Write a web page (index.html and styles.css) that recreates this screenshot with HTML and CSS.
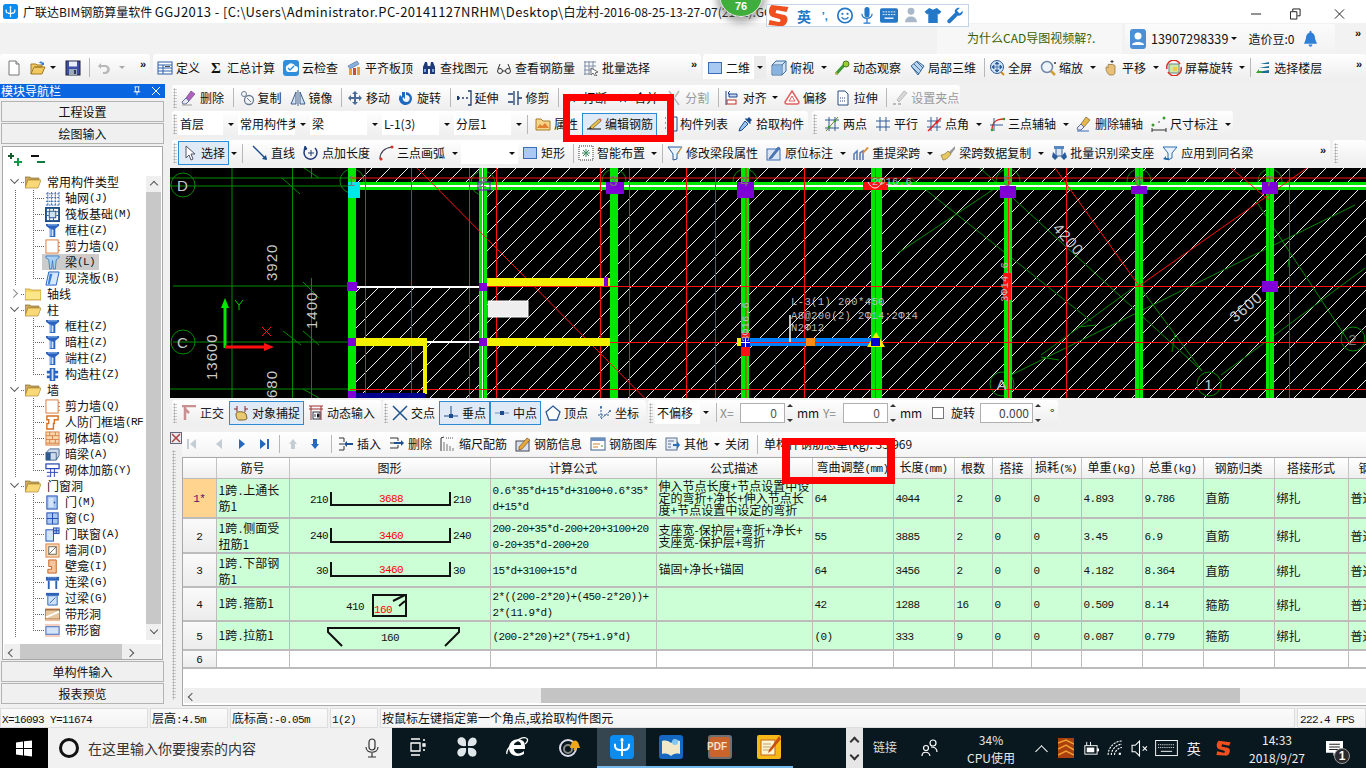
FILE: index.html
```html
<!DOCTYPE html>
<html lang="zh-CN">
<head>
<meta charset="utf-8">
<title>广联达BIM钢筋算量软件 GGJ2013</title>
<link rel="stylesheet" href="styles.css">
</head>
<body>
<svg class="defs" aria-hidden="true">
<defs>
<symbol id="new" viewBox="0 0 16 16"><path d="M3 1h7l3 3v11H3z" fill="#fff" stroke="#777"/><path d="M10 1v3h3" fill="#ddd" stroke="#777"/></symbol>
<symbol id="open" viewBox="0 0 16 16"><path d="M1 14V4h5l1 1h5v2H4l-3 7h11l3-7H5" fill="#f2c860" stroke="#a07a20"/><path d="M9 3c1-2 3-2 4 0l1-1v3h-3l1-1c-1-1-2-1-3-1z" fill="#3a7fd0"/></symbol>
<symbol id="save" viewBox="0 0 16 16"><rect x="1" y="1" width="14" height="14" fill="#3c4ea8" stroke="#223"/><rect x="4" y="1.500" width="8" height="5" fill="#e8eefc"/><rect x="4" y="9" width="8" height="6" fill="#9ab"/><rect x="9" y="10" width="2" height="4" fill="#335"/></symbol>
<symbol id="undo" viewBox="0 0 16 16"><path d="M5 3L2 6l3 3V7h4c3 0 3 4 0 5H7v2h3c5-1 5-8 0-9H5z" fill="#b8b8b8"/></symbol>
<symbol id="tbl" viewBox="0 0 16 16"><rect x="1" y="2" width="14" height="12" fill="#fff" stroke="#2a5ea8"/><path d="M1 5h14M1 8h14M1 11h14M6 5v9" stroke="#2a5ea8"/><rect x="8" y="6" width="5" height="1" fill="#555"/></symbol>
<symbol id="cloud" viewBox="0 0 16 16"><rect width="16" height="16" rx="3" fill="#2f8fdc"/><path d="M3 9a3 3 0 0 1 2-4 4 4 0 0 1 7 1 3 3 0 0 1 0 6H5a3 3 0 0 1-2-3z" fill="#fff"/><path d="M5 8l2 2 4-4" fill="none" stroke="#2f8fdc" stroke-width="1.500"/></symbol>
<symbol id="flush" viewBox="0 0 16 16"><path d="M2 6l9-5 2 3-9 5z" fill="#8ab0dc" stroke="#46689a" stroke-width=".6"/><rect x="3" y="9" width="3" height="6" fill="#e8a040"/><rect x="7" y="8" width="3" height="7" fill="#c85030"/><rect x="11" y="7" width="3" height="8" fill="#e8a040"/></symbol>
<symbol id="binoc" viewBox="0 0 16 16"><path d="M2 14V7l2-5h2l1 5v7zM9 14V7l1-5h2l2 5v7z" fill="#1e3a78"/><rect x="7" y="6" width="2" height="3" fill="#1e3a78"/><rect x="3" y="9" width="2" height="3" fill="#7fa5dc"/><rect x="11" y="9" width="2" height="3" fill="#7fa5dc"/></symbol>
<symbol id="glass" viewBox="0 0 16 16"><circle cx="4" cy="11" r="2.500" fill="none" stroke="#333"/><circle cx="12" cy="11" r="2.500" fill="none" stroke="#333"/><path d="M6.500 11h3M2 9l2-5M14 9l-2-5" stroke="#333" fill="none"/></symbol>
<symbol id="batch" viewBox="0 0 16 16"><path d="M1 2h12M1 6h12M1 10h10M1 14h6M2 1v14M6 1v14M10 1v11" stroke="#8090a8" fill="none"/><path d="M8 8l7 4-3 1 2 3-2 0-2-3-2 2z" fill="#fff" stroke="#333" stroke-width=".7"/></symbol>
<symbol id="sq" viewBox="0 0 16 16"><rect x="1.500" y="2.500" width="13" height="11" fill="#a9c8f2" stroke="#3a6cb8"/></symbol>
<symbol id="box3" viewBox="0 0 16 16"><path d="M1 5l4-4h10v10l-4 4H1z" fill="#cfe2f6" stroke="#3c6d9c"/><path d="M1 5h10v10M11 5l4-4" fill="none" stroke="#3c6d9c"/><path d="M2 6h8v8H2z" fill="#88b4e2"/></symbol>
<symbol id="orbit" viewBox="0 0 16 16"><path d="M2 14L12 3" stroke="#3a9a30" stroke-width="3"/><circle cx="12" cy="4" r="3" fill="#9acd32" stroke="#4a7a20"/><path d="M1 15l3-1-2-2z" fill="#d8b040"/></symbol>
<symbol id="loc3" viewBox="0 0 16 16"><path d="M2 6l6-5 7 5-6 9z" fill="#b9d4ee" stroke="#3c6d9c"/><path d="M5 4l7 7M8 2l6 6M3 7l7 7" stroke="#3c6d9c"/></symbol>
<symbol id="full" viewBox="0 0 16 16"><circle cx="8" cy="7" r="6.500" fill="#cfe2f6" stroke="#2c5c98"/><path d="M8 2v10M3 7h10M8 2l-2 2h4zM8 12l-2-2h4zM3 7l2-2v4zM13 7l-2-2v4z" fill="#2c5c98" stroke="#2c5c98" stroke-width=".7"/><path d="M12 12l3 3" stroke="#d08a20" stroke-width="2"/></symbol>
<symbol id="zoom" viewBox="0 0 16 16"><circle cx="7" cy="7" r="5.500" fill="#eef3fa" stroke="#7088a8" stroke-width="1.500"/><path d="M11 11l4 4" stroke="#d0a030" stroke-width="2.500"/><path d="M14 3h2M15 2v2" stroke="#333"/></symbol>
<symbol id="pan" viewBox="0 0 16 16"><path d="M3 8c0-2 1-1 2 0V5c0-1 1-1 1 0l1-1c1 0 1 1 1 1l1-1c1 0 1 1 1 1l1 0c1 0 1 1 1 2v5c0 2-1 3-3 3H7c-2 0-4-4-4-7z" fill="#e8c078" stroke="#8a6a30" stroke-width=".7"/><path d="M9 0v3M7.500 1.500h3" stroke="#334"/></symbol>
<symbol id="rot" viewBox="0 0 16 16"><rect x="3" y="4" width="10" height="9" fill="#cfe8a8" stroke="#688"/><rect x="7" y="7" width="4" height="4" fill="#f0d040"/><path d="M1 9A7 7 0 0 1 14 4" fill="none" stroke="#d83020" stroke-width="1.500"/><path d="M15 7A7 7 0 0 1 2 12" fill="none" stroke="#d83020" stroke-width="1.500"/></symbol>
<symbol id="floors" viewBox="0 0 16 16"><path d="M5 4l9-2v2H5zM4 8l10-2v2H4zM3 12l11-2v3H3z" fill="#1e6c98"/><path d="M1 13l3-4v2h3v2z" fill="#3aa030"/></symbol>
<symbol id="erase" viewBox="0 0 16 16"><path d="M10 1l4 3-6 7-3-3z" fill="#b060c0" stroke="#604070" stroke-width=".6"/><path d="M5 8l3 3-3 3H2l-1-2z" fill="#e8e8f4" stroke="#5c6c9c"/><path d="M1 15h10" stroke="#999"/></symbol>
<symbol id="copy" viewBox="0 0 16 16"><circle cx="10" cy="10" r="4.500" fill="none" stroke="#6a7c94" stroke-width="1.300"/><circle cx="5" cy="4" r="2.500" fill="none" stroke="#6a7c94"/><path d="M8 8l4 4" stroke="#6a7c94"/></symbol>
<symbol id="mirror" viewBox="0 0 16 16"><path d="M1 14L6 2v12zM15 14L10 2v12z" fill="#d4e2f2" stroke="#3c5f8c"/><path d="M8 0v16" stroke="#3c5f8c"/></symbol>
<symbol id="move" viewBox="0 0 16 16"><path d="M8 1l-3 3h2v3H4V5L1 8l3 3V9h3v3H5l3 3 3-3H9V9h3v2l3-3-3-3v2H9V4h2z" fill="#4c6c98"/></symbol>
<symbol id="rotate" viewBox="0 0 16 16"><path d="M4 2v5L2 5a6.500 6.500 0 1 0 6-3v3a3.500 3.500 0 1 1-3 2l2 2V2z" fill="#1e68c0"/></symbol>
<symbol id="extend" viewBox="0 0 16 16"><path d="M12 1h3v14h-3M1 8h3M6 8h2M10 8h2" stroke="#1c3f70" fill="none" stroke-width="1.300"/><path d="M1 6h2v4H1z" fill="#1c3f70"/></symbol>
<symbol id="trim" viewBox="0 0 16 16"><path d="M7 1v14M11 1v14M1 4h5M1 12h5M11 8h4" stroke="#1c3f70" fill="none" stroke-width="1.300"/></symbol>
<symbol id="cutb" viewBox="0 0 16 16"><path d="M1 8h5M10 8h5M6 4l-2 4 2 4M10 4l2 4-2 4" stroke="#2858a0" fill="none" stroke-width="1.500"/></symbol>
<symbol id="split" viewBox="0 0 16 16"><path d="M3 1l10 14M13 1L9 7M7 10l-4 5" stroke="#b8b8b8" fill="none" stroke-width="1.500"/></symbol>
<symbol id="alignl" viewBox="0 0 16 16"><path d="M2 1v14M5 4h8v3H5z" stroke="#20448c" fill="#c8d8f0"/><rect x="3" y="10" width="9" height="4" fill="#fff" stroke="#c03020"/><path d="M6 1l-2 2 2 2" fill="none" stroke="#20448c"/></symbol>
<symbol id="offset" viewBox="0 0 16 16"><path d="M8 1l7 11c0 2-1 2-2 2H3c-1 0-2 0-2-2z" fill="#fff" stroke="#e06060" stroke-width="1.500"/><path d="M8 6l3 5H5z" fill="#fff" stroke="#e06060"/></symbol>
<symbol id="stretch" viewBox="0 0 16 16"><path d="M3 1h7l3 3v11H3z" fill="#fff" stroke="#2a4c80"/><path d="M5 8h6M5 11h6" stroke="#2a4c80" stroke-dasharray="1 1"/></symbol>
<symbol id="pinset" viewBox="0 0 16 16"><path d="M12 1l3 2-8 9-2-2z" fill="#d8d8d8" stroke="#bbb"/><path d="M1 14h3M6 14h3" stroke="#bbb" stroke-width="2"/></symbol>
<symbol id="prop" viewBox="0 0 16 16"><path d="M1 14V3h5l2 2h7v9z" fill="#f4d488" stroke="#a87c28"/><path d="M2 12l3-4 2 2 3-3 4 5z" fill="#e08030"/></symbol>
<symbol id="edit" viewBox="0 0 16 16"><path d="M1 13h14" stroke="#333" stroke-width="1.200"/><path d="M4 11l9-8 2 2-9 8z" fill="#e8c048" stroke="#6a5020" stroke-width=".7"/><path d="M13 3l2 2 1-1-2-2z" fill="#e07070"/><path d="M4 11l-2 2 4 0z" fill="#333"/></symbol>
<symbol id="list" viewBox="0 0 16 16"><path d="M2 2h3M2 7h3M2 12h3" stroke="#224a88" stroke-dasharray="1 1"/><path d="M9 1h5v14H9" fill="none" stroke="#224a88"/></symbol>
<symbol id="pick" viewBox="0 0 16 16"><path d="M12 1l3 3-2 2 1 1-1 1-5-5 1-1 1 1z" fill="#1c4c90"/><path d="M8 5l3 3-6 6-3 1 1-3z" fill="#9cc4ee" stroke="#1c4c90"/></symbol>
<symbol id="p2" viewBox="0 0 16 16"><path d="M1 4h14M1 12h14M5 1v14M11 1v14" stroke="#345c94" fill="none"/><path d="M2 15L14 1" stroke="#6a8a30"/><circle cx="5" cy="11" r="1.300" fill="#3a9a30"/><circle cx="11" cy="5" r="1.300" fill="#3a9a30"/></symbol>
<symbol id="par" viewBox="0 0 16 16"><path d="M1 5h14M1 11h14M5 1v14M11 1v14" stroke="#345c94" fill="none"/></symbol>
<symbol id="ang" viewBox="0 0 16 16"><path d="M1 5h14M1 11h14M5 1v14M11 1v14" stroke="#345c94" fill="none"/><path d="M2 15L15 2" stroke="#e02020" stroke-width="1.400"/><circle cx="11" cy="6" r="1.500" fill="#e02020"/></symbol>
<symbol id="arc3" viewBox="0 0 16 16"><path d="M3 14C3 6 7 3 15 3" fill="none" stroke="#d83020" stroke-width="1.300"/><path d="M1 9h13M5 2v13" stroke="#345c94"/><circle cx="3" cy="14" r="1.300" fill="#3a9a30"/><circle cx="15" cy="3" r="1.300" fill="#3a9a30"/></symbol>
<symbol id="delax" viewBox="0 0 16 16"><path d="M10 1l4 3-6 7-3-3z" fill="#e8b848" stroke="#604020" stroke-width=".6"/><path d="M5 8l3 3-3 3H2l-1-2z" fill="#e8e8f4" stroke="#5c6c9c"/><path d="M1 15h12" stroke="#3a6cb8"/></symbol>
<symbol id="dim" viewBox="0 0 16 16"><circle cx="2" cy="9" r="1.500" fill="#3a9a30"/><circle cx="13" cy="2" r="1.500" fill="#3a9a30"/><path d="M1 12v4M15 12v4M1 14h14" stroke="#333"/><circle cx="8" cy="6" r=".8" fill="#333"/></symbol>
<symbol id="ptr" viewBox="0 0 16 16"><path d="M4 1v12l3-3 2 5 2-1-2-5h4z" fill="#fff" stroke="#556"/></symbol>
<symbol id="line" viewBox="0 0 16 16"><path d="M1 1l13 13" stroke="#1c4c90" stroke-width="1.500"/><path d="M15 15l-5-1 4-4z" fill="#1c4c90"/></symbol>
<symbol id="plus" viewBox="0 0 16 16"><path d="M3 3a6.500 6.500 0 1 0 9 0" fill="none" stroke="#1e3a78" stroke-width="1.500"/><path d="M2 1l2 3-3 1zM8 5v6M5 8h6" stroke="#1e3a78" fill="#1e3a78"/></symbol>
<symbol id="arc" viewBox="0 0 16 16"><path d="M2 14C2 7 7 3 14 2" fill="none" stroke="#445" stroke-width="1.200"/><circle cx="3" cy="14" r="1.500" fill="#d83020"/><circle cx="14" cy="2" r="1.500" fill="#d83020"/></symbol>
<symbol id="smart" viewBox="0 0 16 16"><rect x="1" y="1" width="14" height="14" fill="#fff" stroke="#333" stroke-dasharray="1 1"/><path d="M8 4v8M4 8h8M5 5l6 6M11 5l-6 6" stroke="#3a8a60"/></symbol>
<symbol id="funnel" viewBox="0 0 16 16"><path d="M1 2h14l-5 7v5l-4 1V9z" fill="#eaf2fc" stroke="#2a5c9c"/><path d="M11 9l4-7" stroke="#e8b030"/></symbol>
<symbol id="tag" viewBox="0 0 16 16"><rect x="1" y="4" width="13" height="11" fill="#d8e4f4" stroke="#3a6cb8"/><path d="M4 12l8-10 2 1-8 10-3 1z" fill="#4c7cc0" stroke="#1c3f70" stroke-width=".5"/></symbol>
<symbol id="reb" viewBox="0 0 16 16"><path d="M1 15V9l3-3v9M7 15V8l3-2v9" fill="none" stroke="#5878b0" stroke-width="1.500"/><path d="M9 8l5-6 2 1-6 6z" fill="#d89040"/></symbol>
<symbol id="brush" viewBox="0 0 16 16"><path d="M9 7l6-6v3l-4 5z" fill="#999"/><path d="M1 10c3 0 5-2 7-4l3 3c-2 3-5 6-8 6z" fill="#e4c860" stroke="#806020" stroke-width=".6"/></symbol>
<symbol id="idf" viewBox="0 0 16 16"><rect x="3" y="1" width="10" height="3" fill="#5888c0"/><path d="M5 4v7h6V4" fill="#dde8f4" stroke="#345c94"/><path d="M2 7l5 5-3 3-3-3zM14 7l-4 5 3 3 3-3z" fill="#2a5c9c"/></symbol>
<symbol id="apply" viewBox="0 0 16 16"><path d="M1 2h14l-5 6v5l-4 2V8z" fill="#eaf2fc" stroke="#2a6cb0"/><path d="M1 14l3-3v2h3v2H4z" fill="#2a6cb0"/></symbol>
<symbol id="ortho" viewBox="0 0 16 16"><path d="M1 1h14M4 1v14M4 4l4 4" stroke="#c89090" fill="none" stroke-width="2.500"/></symbol>
<symbol id="snap" viewBox="0 0 16 16"><path d="M1 4h3M12 4h3M4 1v6M12 1v6" stroke="#8a2020" fill="none"/><path d="M3 9c0-3 8-3 10 0l1 4c0 2-3 2-5 2H6c-2 0-3-3-3-6z" fill="#e8c870" stroke="#806020"/></symbol>
<symbol id="dyn" viewBox="0 0 16 16"><path d="M1 1h14M1 4h14M3 1v14M13 1v14" stroke="#a03030"/><rect x="5" y="7" width="7" height="7" fill="#fff" stroke="#334"/><path d="M7 9v3M9 9h2v3H9" stroke="#334"/></symbol>
<symbol id="xpt" viewBox="0 0 16 16"><path d="M1 1l14 14M15 1L1 15" stroke="#1c5090" stroke-width="1.500"/></symbol>
<symbol id="perp" viewBox="0 0 16 16"><path d="M8 1v10" stroke="#1c4c90"/><path d="M1 11h14" stroke="#1c4c90"/><rect x="6" y="9" width="4" height="4" fill="#1c4c90"/></symbol>
<symbol id="mid" viewBox="0 0 16 16"><path d="M1 8h14" stroke="#7090c0"/><rect x="6" y="6" width="4" height="4" fill="#1c4c90"/></symbol>
<symbol id="vert" viewBox="0 0 16 16"><path d="M8 1l7 6-3 8H4L1 7z" fill="#fff" stroke="#2c5c98" stroke-width="1.300"/></symbol>
<symbol id="coord" viewBox="0 0 16 16"><path d="M5 2v12l9-8M2 10h12" stroke="#2c5c98" fill="none" stroke-dasharray="2 1"/><circle cx="5" cy="2" r="1" fill="#2c5c98"/><circle cx="14" cy="6" r="1" fill="#2c5c98"/></symbol>
<symbol id="ins" viewBox="0 0 16 16"><path d="M1 2h5M1 8h5M1 14h5M6 2v4M6 10v4" stroke="#333" fill="none"/><path d="M9 8h6" stroke="#1c5090" stroke-width="2"/><path d="M9 5l-3 3 3 3z" fill="#1c5090"/></symbol>
<symbol id="del" viewBox="0 0 16 16"><path d="M1 2h8M1 7h4M1 12h8M9 2v3M9 9v3" stroke="#333" fill="none"/><path d="M5 7h7" stroke="#1c5090" stroke-width="2"/><path d="M12 4l3 3-3 3z" fill="#1c5090"/></symbol>
<symbol id="scale" viewBox="0 0 16 16"><path d="M1 15V2M1 2l3-1" stroke="#333"/><path d="M4 15V6M7 15V8M10 15v-5M13 15v-3" stroke="#777"/><path d="M6 2h7" stroke="#555" stroke-dasharray="1 1"/></symbol>
<symbol id="info" viewBox="0 0 16 16"><rect x="1" y="5" width="13" height="10" fill="#d8e0ec" stroke="#445"/><path d="M4 11l8-9 3 2-8 9-3 1z" fill="#e8a838" stroke="#604020" stroke-width=".6"/></symbol>
<symbol id="lib" viewBox="0 0 16 16"><rect x="1" y="2" width="14" height="12" fill="#fff" stroke="#3a6090"/><rect x="1" y="2" width="14" height="3" fill="#6a90c0"/><path d="M3 8h7M3 11h5" stroke="#d08030"/><path d="M11 10h2" stroke="#3a9a30"/></symbol>
<symbol id="other" viewBox="0 0 16 16"><rect x="1" y="2" width="11" height="12" fill="#e8eef8" stroke="#5a7090"/><path d="M8 8h4V5l3 4-3 4v-3H8z" fill="#2a6cc0"/><path d="M3 5h6M3 8h3M3 11h3" stroke="#5a7090"/></symbol>
<symbol id="folderc" viewBox="0 0 16 14"><path d="M0 13V2h5l1 1h10v10z" fill="#f8d868" stroke="#b89030" stroke-width=".7"/><path d="M1 5h14v7H1z" fill="#fbe68c"/></symbol>
<symbol id="foldero" viewBox="0 0 16 14"><path d="M0 13V2h5l1 1h8v2H4z" fill="#c8a860" stroke="#8a7030" stroke-width=".7"/><path d="M0 13l3-8h13l-3 8z" fill="#f8d878" stroke="#b08a30" stroke-width=".7"/></symbol>
<symbol id="tgrid" viewBox="0 0 16 16"><path d="M1 3h14M1 7h14M1 11h14M1 15h14M3 1v14M7 1v14M11 1v14M15 1v14" stroke="#2c5fb0" stroke-dasharray="2 1"/></symbol>
<symbol id="traft" viewBox="0 0 16 16"><rect x="1" y="1" width="14" height="14" fill="#fff" stroke="#1c4c88" stroke-width="2"/><rect x="4.500" y="4.500" width="7" height="7" fill="#cfe0f4" stroke="#1c4c88"/><path d="M2 5h2M2 9h2M12 5h2M12 9h2M5 2v2M9 2v2M5 12v2M9 12v2" stroke="#1c4c88"/></symbol>
<symbol id="tcol" viewBox="0 0 16 16"><path d="M1 1h14v2l-4 3v9H5V6L1 3z" fill="#2a62c0"/><path d="M3 2h10M6 6v8" stroke="#9cc0f0"/><path d="M7 7h2v7H7z" fill="#cfe2fa"/></symbol>
<symbol id="twall" viewBox="0 0 16 16"><rect x="1" y="1" width="13" height="14" fill="url(#spk)" stroke="#d87838"/><path d="M14 4h2M14 8h2M14 12h2" stroke="#d87838"/></symbol>
<symbol id="tbeam" viewBox="0 0 16 16"><path d="M1 1h14v2l-3 2-1 10H9L8 6 7 15H5L4 5 1 3z" fill="#a8cff0" stroke="#2a72c0" stroke-width=".8"/></symbol>
<symbol id="tslab" viewBox="0 0 16 16"><path d="M4 1h11l-3 14H1z" fill="#d6e8fb" stroke="#1c5cc0"/><path d="M3 14L5 3h3L5 14z" fill="#3a80d8"/></symbol>
<symbol id="tstruct" viewBox="0 0 16 16"><path d="M5 1h6v3h3v3h-3v2h3v3h-3v3H5v-3H2V9h3V7H2V4h3z" fill="#2a62c0"/><path d="M7 2h2v12H7z" fill="#cfe2fa"/></symbol>
<symbol id="tdoorw" viewBox="0 0 16 16"><path d="M2 1h12v4h-4v4H9v6H2V9h2V5H2z" fill="#fff" stroke="#d87020" stroke-width="1.500"/></symbol>
<symbol id="tbrick" viewBox="0 0 16 16"><rect x="1" y="1" width="14" height="14" fill="#f8d8b0" stroke="#d88048"/><path d="M1 5h14M1 9h14M1 13h14M5 1v4M11 1v4M8 5v4M5 9v4M11 9v4" stroke="#d88048"/></symbol>
<symbol id="thid" viewBox="0 0 16 16"><path d="M1 6l4-4h10v7l-3 5H1z" fill="#cfdcee" stroke="#4a6890"/><path d="M1 6h11v8" fill="none" stroke="#4a6890"/><rect x="1" y="6" width="5" height="8" fill="#2f5a90"/></symbol>
<symbol id="tmas" viewBox="0 0 16 16"><rect x="1" y="1" width="14" height="5" fill="#fff" stroke="#2448b0" stroke-width="1.300"/><path d="M6 6v9M10 6v9M2 10h12M2 14h4" stroke="#2448b0"/></symbol>
<symbol id="tdoor" viewBox="0 0 16 16"><rect x="2" y="1" width="11" height="14" fill="#a9c8f0" stroke="#1c4cb0"/><circle cx="10" cy="8" r="1" fill="#1c4cb0"/><rect x="4" y="3" width="5" height="10" fill="#d4e4f8"/></symbol>
<symbol id="twin" viewBox="0 0 16 16"><rect x="2" y="2" width="12" height="12" fill="#a9c8f0" stroke="#1c4cb0"/><path d="M8 2v12M2 8h12" stroke="#1c4cb0"/></symbol>
<symbol id="tdw" viewBox="0 0 16 16"><rect x="1" y="3" width="8" height="12" fill="#d4e4f8" stroke="#1c4cb0"/><rect x="9" y="1" width="6" height="6" fill="#a9c8f0" stroke="#1c4cb0"/><path d="M12 1v6M9 4h6" stroke="#1c4cb0"/></symbol>
<symbol id="thole" viewBox="0 0 16 16"><rect x="1" y="1" width="14" height="14" fill="#f8d8b0" stroke="#d88048"/><rect x="4" y="4" width="8" height="8" fill="#fff" stroke="#665"/><path d="M4 12l8-8" stroke="#665"/></symbol>
<symbol id="tniche" viewBox="0 0 16 16"><path d="M4 1h8v14H3v-4h4V8H4z" fill="#f4c49c" stroke="#c86020"/></symbol>
<symbol id="tconn" viewBox="0 0 16 16"><rect x="1" y="2" width="14" height="4" fill="#2c62b8"/><path d="M3 3h10" stroke="#9cc0f0" stroke-dasharray="1 1"/><path d="M4 6v9M12 6v9" stroke="#2c62b8" stroke-width="2"/></symbol>
<symbol id="tlint" viewBox="0 0 16 16"><rect x="1" y="2" width="14" height="3" fill="#2c62b8"/><path d="M3 5h10v10H3z" fill="#cfe2fa" stroke="#2c62b8"/><path d="M5 13l6-6" stroke="#2c62b8"/></symbol>
<symbol id="tsh" viewBox="0 0 16 16"><rect y="1" width="16" height="2" fill="#f0c0a0"/><rect y="3" width="16" height="10" fill="#e8c8a0" stroke="#764010"/><path d="M1 11l14-6" stroke="#fff" stroke-width="2"/><rect y="13" width="16" height="2" fill="#f0c0a0"/></symbol>
<symbol id="tsw" viewBox="0 0 16 16"><rect y="1" width="16" height="14" fill="#f4d0c0"/><rect x="1" y="4" width="14" height="8" fill="#d4e4f8" stroke="#3a6cc8"/></symbol>
<symbol id="win" viewBox="0 0 16 16"><path d="M0 2l7-1v6.500H0zM8 .800L16 0v7.500H8zM0 8.500h7V15l-7-1zM8 8.500h8V16l-8-1z" fill="#fff"/></symbol>
<symbol id="mic" viewBox="0 0 16 20"><rect x="5" y="1" width="6" height="11" rx="3" fill="none" stroke="#333" stroke-width="1.200"/><path d="M2 9c0 7 12 7 12 0M8 15v4M4 19h8" fill="none" stroke="#333" stroke-width="1.200"/></symbol>
<symbol id="tview" viewBox="0 0 20 20"><path d="M4 6h9v8H4zM4 2h9M4 18h9M16 7h2v2h-2zM16 3h2M16 13h2" fill="none" stroke="#fff" stroke-width="1.300"/></symbol>
<symbol id="fan" viewBox="0 0 24 24"><path d="M11 11C5 12 1 8 3 4c2-3 8-2 8 3zM13 11c-1-6 3-10 7-8 3 2 2 8-3 8zM13 13c6-1 10 3 8 7-2 3-8 2-8-3zM11 13c1 6-3 10-7 8-3-2-2-8 3-8z" fill="#dfe7ea"/></symbol>
<symbol id="ie" viewBox="0 0 24 24"><path d="M4 13c0-9 11-11 15-6 1 2 1 4 1 7H9c0 5 6 6 10 2v3c-6 4-15 2-15-6zm5-3h7c0-5-7-5-7 0z" fill="#fff"/><path d="M2 19C0 13 16 1 21 3c3 1 1 5-1 6" fill="none" stroke="#fff" stroke-width="1.300"/></symbol>
<symbol id="swirl" viewBox="0 0 24 24"><circle cx="10" cy="13" r="8" fill="none" stroke="#dde" stroke-width="2"/><circle cx="10" cy="14" r="4" fill="none" stroke="#888" stroke-width="2"/><path d="M13 10c1-6 7-6 8 0l1 3H12z" fill="#f0a818"/><circle cx="17" cy="14" r="1.500" fill="#f0a818"/></symbol>
<symbol id="appblue" viewBox="0 0 24 24"><rect width="24" height="24" rx="4" fill="#0a8cf0"/><path d="M12 3c-2 0-2 4 0 4s2-4 0-4zM11 7h2v7h-2zM4 10c0-2 2-2 2 0 0 3 1 4 6 4s6-1 6-4c0-2 2-2 2 0 0 5-3 6-7 6v5h-2v-5c-4 0-7-1-7-6z" fill="#fff"/></symbol>
<symbol id="appbook" viewBox="0 0 24 24"><rect width="24" height="24" rx="3" fill="#1468c0"/><path d="M3 6c4-1 7 0 9 2 2-2 5-3 9-2v13c-4-1-7 0-9 2-2-2-5-3-9-2z" fill="#f0e8c8"/><circle cx="16" cy="7" r="3" fill="#80c8f0"/></symbol>
<symbol id="apppdf" viewBox="0 0 24 24"><rect width="24" height="24" rx="3" fill="#707070"/><rect x="2" y="2" width="20" height="20" rx="2" fill="#c8642c"/></symbol>
<symbol id="appnote" viewBox="0 0 24 24"><rect width="24" height="24" rx="2" fill="#f8b818"/><rect x="4" y="5" width="14" height="15" fill="#fdf4d0" stroke="#c06820"/><path d="M6 9h8M6 12h8M6 15h8" stroke="#c0a070"/><path d="M22 1L12 15l-1 3 3-2L24 4z" fill="#c85010"/></symbol>
<symbol id="people" viewBox="0 0 20 20"><circle cx="13" cy="5" r="3" fill="none" stroke="#fff" stroke-width="1.200"/><circle cx="6" cy="10" r="2.500" fill="none" stroke="#fff" stroke-width="1.200"/><path d="M2 18c0-5 7-5 8 0M11 9c3 0 6 1 6 5" fill="none" stroke="#fff" stroke-width="1.200"/></symbol>
<symbol id="game" viewBox="0 0 16 20"><rect width="16" height="20" fill="#a84010"/><path d="M0 5l8-3 8 4M0 11l8-4 8 5M0 17l8-4 8 4" fill="none" stroke="#f0a030" stroke-width="1.500"/></symbol>
<symbol id="bat" viewBox="0 0 18 16"><rect x="3" y="5" width="13" height="9" fill="none" stroke="#fff"/><rect x="5" y="7" width="8" height="5" fill="#fff"/><path d="M5 1v4M9 1v4" stroke="#fff"/><rect x="16" y="8" width="2" height="3" fill="#fff"/></symbol>
<symbol id="wifi" viewBox="0 0 16 16"><path d="M1 14c0-7 6-13 13-13M4 14c0-5 5-10 10-10M7 14c0-3 4-7 7-7" fill="none" stroke="#fff" stroke-dasharray="2 1" transform="translate(1 0)"/><rect x="12" y="12" width="2" height="2" fill="#fff"/></symbol>
<symbol id="spk" viewBox="0 0 16 16"><path d="M1 5h3l4-4v14l-4-4H1z" fill="none" stroke="#fff"/><path d="M11 6l4 4M15 6l-4 4" stroke="#fff"/></symbol>
<symbol id="kbd" viewBox="0 0 24 18"><rect x=".5" y=".5" width="23" height="16" fill="none" stroke="#fff"/><path d="M3 5h18M3 8h18" stroke="#fff" stroke-dasharray="1 1"/><path d="M6 12h12" stroke="#fff"/></symbol>
<symbol id="sgou" viewBox="0 0 24 24"><path d="M5 1l17 2-2 5-10-2-1 3 9 2c3 1 4 4 2 8s-5 3-8 3L2 21l1-5 9 2c2 0 3-2 1-3l-7-2C2 12 1 5 5 1z" fill="#f05020"/></symbol>
<symbol id="notif" viewBox="0 0 16 16"><path d="M0 1h16v11H9l-2 3v-3H0z" fill="#fff"/><path d="M3 4h10M3 6.500h10M3 9h10" stroke="#222"/></symbol>
<symbol id="user" viewBox="0 0 16 20"><rect width="16" height="20" rx="3" fill="#4b90d4"/><circle cx="8" cy="7" r="3.500" fill="#fff"/><path d="M2 16c0-4 12-4 12 0z" fill="#fff"/></symbol>
<symbol id="bell" viewBox="0 0 14 18"><path d="M7 0c1 0 1 1 1 2 3 1 4 4 4 7l2 5H0l2-5c0-3 1-6 4-7 0-1 0-2 1-2z" fill="#2e7fd8"/><path d="M5 15h4c0 3-4 3-4 0z" fill="#2e7fd8"/></symbol>
<symbol id="mile" viewBox="0 0 20 20"><circle cx="10" cy="10" r="8.500" fill="none" stroke="#2478c8" stroke-width="2"/><circle cx="7" cy="8" r="1.300" fill="#2478c8"/><circle cx="13" cy="8" r="1.300" fill="#2478c8"/><path d="M6 12c2 3 6 3 8 0" fill="none" stroke="#2478c8" stroke-width="1.500"/></symbol>
<symbol id="imic" viewBox="0 0 16 20"><rect x="5" y="0" width="6" height="12" rx="3" fill="#2478c8"/><path d="M2 8c0 7 12 7 12 0M8 14v5M4 19h8" fill="none" stroke="#2478c8" stroke-width="1.500"/></symbol>
<symbol id="ikbd" viewBox="0 0 20 16"><rect width="20" height="16" rx="2" fill="#2478c8"/><path d="M3 4h14M3 7h14" stroke="#fff" stroke-dasharray="2 1"/><path d="M5 11h10" stroke="#fff" stroke-width="1.500"/></symbol>
<symbol id="iper" viewBox="0 0 16 20"><circle cx="8" cy="5" r="4" fill="#a9b8c8"/><path d="M1 18c0-9 14-9 14 0z" fill="#a9b8c8"/></symbol>
<symbol id="ishirt" viewBox="0 0 18 18"><path d="M5 1l4 2 4-2 5 4-3 3-1-1v10H4V7L3 8 0 5z" fill="#2478c8"/></symbol>
<symbol id="iwr" viewBox="0 0 18 18"><path d="M17 4l-3 3-3-3 3-3c-3-1-6 2-5 5L1 14c-1 2 1 4 3 3l8-8c3 1 6-2 5-5z" fill="#2478c8"/></symbol>
<pattern id="spk" width="3" height="3" patternUnits="userSpaceOnUse"><rect width="3" height="3" fill="#f8f8f8"/><rect x="1" y="1" width="1" height="1" fill="#aaa"/></pattern>
<pattern id="hatch" width="18" height="18" patternUnits="userSpaceOnUse"><path d="M-1 19L19 -1" stroke="#eee" stroke-width="1"/></pattern>
</defs>
</svg>

<div class="app">
<header class="titlebar">
  <svg class="title-ic"><use href="#appblue"/></svg>
  <span class="title-text">广联达BIM钢筋算量软件 <span class="title-path">GGJ2013 - [C:\Users\Administrator.PC-20141127NRHM\Desktop\</span>白龙村-2016-08-25-13-27-07(2161).GGJ12]</span>
  <span class="winbtns">
    <svg viewBox="0 0 12 12"><path d="M0 6h11" stroke="#111"/></svg>
    <svg viewBox="0 0 12 12"><path d="M.5 3.500h7v8h-7zM3 3V.5h8V8H8" fill="none" stroke="#111"/></svg>
    <svg viewBox="0 0 12 12"><path d="M1 1l10 10M11 1L1 11" stroke="#111"/></svg>
  </span>
</header>

<div class="inforow">
  <div class="hint">为什么CAD导图视频解?.</div>
  <div class="userbox">
    <svg class="ic-user"><use href="#user"/></svg><span class="phone">13907298339</span><i class="dd"></i>
    <span class="bean">造价豆:0</span><svg class="ic-bell"><use href="#bell"/></svg>
  </div>
  <span class="more more-r">»</span>
</div>

<div class="tbrow row1">
  <div class="tb tb-file">
    <span class="t"><svg class="ic"><use href="#new"/></svg></span>
    <span class="t t-open"><svg class="ic"><use href="#open"/></svg></span><i class="dd dd-n"></i>
    <span class="t"><svg class="ic"><use href="#save"/></svg></span><b class="sep"></b>
    <span class="t t-undo"><svg class="ic"><use href="#undo"/></svg></span><i class="dd dd-g"></i>
    <span class="more">»</span>
  </div>
  <div class="tb tb-calc">
    <span class="t"><svg class="ic"><use href="#tbl"/></svg>定义</span>
    <span class="t"><span class="sigma">Σ</span>汇总计算</span>
    <span class="t"><svg class="ic"><use href="#cloud"/></svg>云检查</span>
    <span class="t"><svg class="ic"><use href="#flush"/></svg>平齐板顶</span>
    <span class="t"><svg class="ic"><use href="#binoc"/></svg>查找图元</span>
    <span class="t"><svg class="ic"><use href="#glass"/></svg>查看钢筋量</span>
    <span class="t"><svg class="ic"><use href="#batch"/></svg>批量选择</span>
    <span class="more">»</span>
  </div>
  <div class="tb tb-view">
    <span class="t t-2d"><svg class="ic"><use href="#sq"/></svg>二维</span><i class="dd dd-box"></i>
    <span class="t"><svg class="ic"><use href="#box3"/></svg>俯视</span><i class="dd"></i>
    <span class="t"><svg class="ic"><use href="#orbit"/></svg>动态观察</span>
    <span class="t"><svg class="ic"><use href="#loc3"/></svg>局部三维</span><b class="sep"></b>
    <span class="t"><svg class="ic"><use href="#full"/></svg>全屏</span>
    <span class="t"><svg class="ic"><use href="#zoom"/></svg>缩放</span><i class="dd"></i>
    <span class="t"><svg class="ic"><use href="#pan"/></svg>平移</span><i class="dd"></i>
    <span class="t"><svg class="ic"><use href="#rot"/></svg>屏幕旋转</span><i class="dd dd-n"></i><b class="sep"></b>
    <span class="t"><svg class="ic"><use href="#floors"/></svg>选择楼层</span>
    <span class="more">»</span>
  </div>
</div>

<div class="work">
<aside class="side">
  <div class="side-head"><span>模块导航栏</span><span class="side-ctl"><svg viewBox="0 0 10 12"><path d="M2 1h6M3 1v6h4V1M1 7h8M5 7v4" stroke="#fff" fill="none"/></svg><svg viewBox="0 0 10 10"><path d="M1 1l8 8M9 1L1 9" stroke="#fff"/></svg></span></div>
  <div class="side-tab">工程设置</div>
  <div class="side-tab">绘图输入</div>
  <div class="tree-panel">
    <div class="tree-tools">
      <svg class="tt-ic" viewBox="0 0 42 16"><path d="M2 4h6M5 1v6" stroke="#145a2c" stroke-width="2"/><path d="M8 10h8M12 6v8" stroke="#0e9c48" stroke-width="2"/><path d="M25 4h8" stroke="#111" stroke-width="2"/><path d="M31 10h8" stroke="#0e7c3c" stroke-width="2"/></svg>
    </div>
    <div class="tree-body">
      <div class="tree">
        <div class="nd g"><i class="chev open"></i><svg class="fd"><use href="#foldero"/></svg>常用构件类型</div>
        <div class="nd c"><svg class="ti"><use href="#tgrid"/></svg>轴网<span class="lat">(J)</span></div>
        <div class="nd c"><svg class="ti"><use href="#traft"/></svg>筏板基础<span class="lat">(M)</span></div>
        <div class="nd c"><svg class="ti"><use href="#tcol"/></svg>框柱<span class="lat">(Z)</span></div>
        <div class="nd c"><svg class="ti"><use href="#twall"/></svg>剪力墙<span class="lat">(Q)</span></div>
        <div class="nd c sel"><svg class="ti"><use href="#tbeam"/></svg>梁<span class="lat">(L)</span></div>
        <div class="nd c last"><svg class="ti"><use href="#tslab"/></svg>现浇板<span class="lat">(B)</span></div>
        <div class="nd g"><i class="chev"></i><svg class="fd"><use href="#folderc"/></svg>轴线</div>
        <div class="nd g"><i class="chev open"></i><svg class="fd"><use href="#foldero"/></svg>柱</div>
        <div class="nd c"><svg class="ti"><use href="#tcol"/></svg>框柱<span class="lat">(Z)</span></div>
        <div class="nd c"><svg class="ti"><use href="#tcol"/></svg>暗柱<span class="lat">(Z)</span></div>
        <div class="nd c"><svg class="ti"><use href="#tcol"/></svg>端柱<span class="lat">(Z)</span></div>
        <div class="nd c last"><svg class="ti"><use href="#tstruct"/></svg>构造柱<span class="lat">(Z)</span></div>
        <div class="nd g"><i class="chev open"></i><svg class="fd"><use href="#foldero"/></svg>墙</div>
        <div class="nd c"><svg class="ti"><use href="#twall"/></svg>剪力墙<span class="lat">(Q)</span></div>
        <div class="nd c"><svg class="ti"><use href="#tdoorw"/></svg>人防门框墙<span class="lat">(RF</span></div>
        <div class="nd c"><svg class="ti"><use href="#tbrick"/></svg>砌体墙<span class="lat">(Q)</span></div>
        <div class="nd c"><svg class="ti"><use href="#thid"/></svg>暗梁<span class="lat">(A)</span></div>
        <div class="nd c last"><svg class="ti"><use href="#tmas"/></svg>砌体加筋<span class="lat">(Y)</span></div>
        <div class="nd g"><i class="chev open"></i><svg class="fd"><use href="#foldero"/></svg>门窗洞</div>
        <div class="nd c"><svg class="ti"><use href="#tdoor"/></svg>门<span class="lat">(M)</span></div>
        <div class="nd c"><svg class="ti"><use href="#twin"/></svg>窗<span class="lat">(C)</span></div>
        <div class="nd c"><svg class="ti"><use href="#tdw"/></svg>门联窗<span class="lat">(A)</span></div>
        <div class="nd c"><svg class="ti"><use href="#thole"/></svg>墙洞<span class="lat">(D)</span></div>
        <div class="nd c"><svg class="ti"><use href="#tniche"/></svg>壁龛<span class="lat">(I)</span></div>
        <div class="nd c"><svg class="ti"><use href="#tconn"/></svg>连梁<span class="lat">(G)</span></div>
        <div class="nd c"><svg class="ti"><use href="#tlint"/></svg>过梁<span class="lat">(G)</span></div>
        <div class="nd c"><svg class="ti"><use href="#tsh"/></svg>带形洞</div>
        <div class="nd c last"><svg class="ti"><use href="#tsw"/></svg>带形窗</div>
      </div>
      <div class="vbar"><i class="sb-up"></i><b class="thumb-v"></b><i class="sb-dn"></i></div>
    </div>
    <div class="hbar"><i class="sb-lt"></i><b class="thumb-h"></b><i class="sb-rt"></i></div>
  </div>
  <div class="side-tab">单构件输入</div>
  <div class="side-tab">报表预览</div>
</aside>

<main class="mainc">
  <div class="tbrow row3">
    <div class="tb tb-edit"><span class="grip"></span>
      <span class="t"><svg class="ic"><use href="#erase"/></svg>删除</span><b class="sep"></b>
      <span class="t"><svg class="ic"><use href="#copy"/></svg>复制</span>
      <span class="t"><svg class="ic"><use href="#mirror"/></svg>镜像</span><b class="sep"></b>
      <span class="t"><svg class="ic"><use href="#move"/></svg>移动</span>
      <span class="t"><svg class="ic"><use href="#rotate"/></svg>旋转</span><b class="sep"></b>
      <span class="t"><svg class="ic"><use href="#extend"/></svg>延伸</span>
      <span class="t"><svg class="ic"><use href="#trim"/></svg>修剪</span><b class="sep"></b>
      <span class="t"><svg class="ic"><use href="#cutb"/></svg>打断</span>
      <span class="t"><svg class="ic"><use href="#cutb"/></svg>合并</span>
      <span class="t off"><svg class="ic"><use href="#split"/></svg>分割</span><b class="sep"></b>
      <span class="t"><svg class="ic"><use href="#alignl"/></svg>对齐</span><i class="dd dd-n"></i>
      <span class="t"><svg class="ic"><use href="#offset"/></svg>偏移</span>
      <span class="t"><svg class="ic"><use href="#stretch"/></svg>拉伸</span><b class="sep"></b>
      <span class="t off"><svg class="ic"><use href="#pinset"/></svg>设置夹点</span>
    </div>
  </div>
  <div class="tbrow row4">
    <div class="tb tb-floor"><span class="grip"></span>
      <span class="combo c-first">首层</span><i class="dd dd-c"></i>
      <span class="combo">常用构件类</span><i class="dd dd-c"></i>
      <span class="combo">梁</span><i class="dd dd-c"></i>
      <span class="combo">L-1(3)</span><i class="dd dd-c"></i>
      <span class="combo">分层1</span><i class="dd dd-c"></i><b class="sep"></b>
      <span class="t"><svg class="ic"><use href="#prop"/></svg>属性</span>
      <span class="t t-on t-edit"><svg class="ic"><use href="#edit"/></svg>编辑钢筋</span>
      <span class="t t-list"><svg class="ic"><use href="#list"/></svg>构件列表</span>
      <span class="t t-pick"><svg class="ic"><use href="#pick"/></svg>拾取构件</span>
    </div>
    <div class="tb tb-axis"><span class="grip"></span>
      <span class="t t-first"><svg class="ic"><use href="#p2"/></svg>两点</span>
      <span class="t"><svg class="ic"><use href="#par"/></svg>平行</span>
      <span class="t"><svg class="ic"><use href="#ang"/></svg>点角</span><i class="dd"></i>
      <span class="t"><svg class="ic"><use href="#arc3"/></svg>三点辅轴</span><i class="dd"></i>
      <span class="t"><svg class="ic"><use href="#delax"/></svg>删除辅轴</span>
      <span class="t"><svg class="ic"><use href="#dim"/></svg>尺寸标注</span><i class="dd"></i>
    </div>
  </div>
  <div class="tbrow row5">
    <div class="tb tb-draw"><span class="grip"></span>
      <span class="t t-on t-sel"><svg class="ic"><use href="#ptr"/></svg>选择</span><i class="dd dd-n"></i><b class="sep"></b>
      <span class="t t-line"><svg class="ic"><use href="#line"/></svg>直线</span>
      <span class="t"><svg class="ic"><use href="#plus"/></svg>点加长度</span>
      <span class="t"><svg class="ic"><use href="#arc"/></svg>三点画弧</span><i class="dd"></i>
      <span class="combo c-blank"><i class="dd"></i></span>
      <span class="t"><svg class="ic"><use href="#sq"/></svg>矩形</span><b class="sep"></b>
      <span class="t"><svg class="ic"><use href="#smart"/></svg>智能布置</span><i class="dd dd-n"></i><b class="sep"></b>
      <span class="t"><svg class="ic"><use href="#funnel"/></svg>修改梁段属性</span>
      <span class="t"><svg class="ic"><use href="#tag"/></svg>原位标注</span><i class="dd"></i>
      <span class="t"><svg class="ic"><use href="#reb"/></svg>重提梁跨</span><i class="dd"></i>
      <span class="t"><svg class="ic"><use href="#brush"/></svg>梁跨数据复制</span><i class="dd"></i>
      <span class="t"><svg class="ic"><use href="#idf"/></svg>批量识别梁支座</span>
      <span class="t"><svg class="ic"><use href="#apply"/></svg>应用到同名梁</span>
      <span class="more">»</span>
    </div>
    <div class="tb tb-stub"><span class="grip"></span><span class="stub"></span></div>
  </div>

  <svg class="canvas" viewBox="170 168 1196 230">
    <rect x="170" y="168" width="1196" height="230" fill="#000"/>
    <rect x="356" y="168" width="1010" height="230" fill="url(#hatch)"/>
    <rect x="356" y="190" width="124" height="96" fill="#000"/>
    <g stroke="#008a00" fill="none">
      <path d="M170 178H352M170 186H352M173 286H350M173 342H350M170 389H350M232 168V398M292.500 168V398M311.500 168V178M311.500 278V398"/>
      <path d="M282 178l18 16M303 282l16 16M283 331l18 14M303 331l16 14M303 389l16 9M304 168l15 10"/>
      <path d="M980 168L1202 371M898 253L1000 185M1011 375L1355 205M1221 375L1365 268M1139 286L1202 371M911 178L1091 321M1041 355L1133 288M1256 201L1351 345"/>
      <path d="M1078 327l18-2M1041 357l18 3M1175 334l-3 18M1290 253l-2 14"/>
      <circle cx="183" cy="185" r="12"/><circle cx="183" cy="342" r="12"/>
      <circle cx="352" cy="181" r="12"/><circle cx="483" cy="183" r="12"/><circle cx="614" cy="181" r="12"/><circle cx="745" cy="181" r="12"/>
      <circle cx="1008" cy="181" r="12"/><circle cx="1139" cy="181" r="12"/><circle cx="1270" cy="181" r="12"/>
      <circle cx="1002" cy="384" r="12"/><circle cx="1209" cy="384" r="12"/><circle cx="1353" cy="339" r="12"/>
    </g>
    <g fill="#00e800">
      <rect x="350" y="182" width="1016" height="8"/>
      <rect x="348" y="168" width="8" height="230"/><rect x="479" y="168" width="8" height="230"/>
      <rect x="610" y="168" width="8" height="230"/><rect x="741" y="168" width="8" height="230"/>
      <rect x="871" y="168" width="11" height="230"/><rect x="1004" y="168" width="8" height="230"/>
      <rect x="1135" y="168" width="8" height="230"/><rect x="1266" y="168" width="8" height="230"/>
    </g>
    <path d="M356 186H1366" stroke="#fff" stroke-width="2"/>
    <path d="M483 168V398" stroke="#fff" stroke-width="2"/>
    <g stroke="#ff1010" fill="none">
      <path d="M350 178H1366M350 286.500H1366M350 342.500H1366M350 389.500H1366"/>
      <path d="M365.500 168V398M411.500 168V398M469.500 168V398M496.500 168V398M600.500 168V398M629.500 168V398M686.500 168V398M715.500 168V398M746 168V398M804.500 168V398M875.500 168V398M1008.500 168V398M1066.500 168V398M1139.500 168V398M1269.500 168V398M1289.500 168V398M483.500 168V398"/>
      <path d="M417 168L644.500 398M1055 168L1139 286M1307 168L1139 286M1231 168L1270 201"/>
    </g>
    <g fill="#f4f000">
      <rect x="487" y="278" width="123" height="8"/><rect x="356" y="338" width="71" height="8"/><rect x="423" y="346" width="4" height="48"/><rect x="487" y="338" width="123" height="8"/>
    </g>
    <path d="M353 287H480M427 342H480" stroke="#fff" stroke-width="2"/>
    <path d="M356 393h69v5h-69z" fill="#00008c"/>
    <rect x="348" y="182" width="12" height="16" fill="#00e8e8"/>
    <g fill="#8000d8">
      <rect x="606" y="182" width="18" height="12"/><rect x="737" y="182" width="17" height="16"/><rect x="1000" y="186" width="16" height="12"/><rect x="1131" y="186" width="16" height="8"/><rect x="1262" y="182" width="16" height="12"/><rect x="1262" y="281" width="16" height="11"/>
      <rect x="347" y="282" width="10" height="9"/><rect x="479" y="283" width="8" height="8"/><rect x="604" y="277" width="4" height="9"/><rect x="348" y="338" width="8" height="8"/><rect x="479" y="338" width="8" height="8"/><rect x="348" y="391" width="8" height="7"/>
    </g>
    <rect x="478" y="182" width="12" height="8" fill="none" stroke="#8000d8"/>
    <rect x="488" y="301" width="40" height="16" fill="#eee" stroke="#fff"/>
    <path d="M749 338h122v8H749z" fill="#0080ff"/><path d="M749 342.500H871" stroke="#ff1010"/>
    <rect x="806" y="338" width="9" height="8" fill="#ff8c10"/>
    <path d="M790 315v27" stroke="#fff" stroke-width="1.500"/>
    <path d="M876 332l9 15h-18z" fill="#f4f000"/><rect x="871" y="338" width="9" height="8" fill="#0000d0"/>
    <path d="M741 333h9v5h-9zM741 347h9v9h-9z" fill="#ff1010"/><path d="M737 338h4v8h-4z" fill="#f4f000"/><rect x="741" y="338" width="9" height="9" fill="#0000d0"/><path d="M745.500 338v9M741 342.500h9" stroke="#fff"/>
    <path d="M863 182h25v8h-25z" fill="#ff1010"/><path d="M868 182c4 8 10 8 14 0" fill="none" stroke="#fff"/>
    <path d="M1003 273h8v27h-8z" fill="#ff1010"/>
    <path d="M225 348V306" stroke="#00e800" stroke-width="3"/><path d="M225 298l-4 10h8z" fill="#00e800"/>
    <path d="M225 347H265" stroke="#ff1010" stroke-width="3"/><path d="M274 347l-10-4v8z" fill="#ff1010"/>
    <path d="M235 300l4 5 4-5M239 305v5" stroke="#00d000" fill="none"/><path d="M262 327l9 9M271 327l-9 9" stroke="#ff1010"/>
    <g class="cad">
      <text x="183" y="191" class="ctr">D</text><text x="183" y="348" class="ctr">C</text>
      <text transform="translate(277 281) rotate(-90)">3920</text>
      <text transform="translate(317 329) rotate(-90)">1400</text>
      <text transform="translate(217 380) rotate(-90)">13600</text>
      <text transform="translate(277 398) rotate(-90)">680</text>
      <text transform="translate(1052 229) rotate(48)">4200</text>
      <text transform="translate(1235 323) rotate(-40)">3600</text>
      <text x="1002" y="390" class="ctr">A</text><text x="1209" y="390" class="ctr">1</text><text x="1353" y="345" class="ctr dim-t">2</text>
      <text x="352" y="186" class="ctr dim-t">1</text><text x="483" y="187" class="ctr dim-t">2</text><text x="614" y="186" class="ctr dim-t">3</text><text x="745" y="186" class="ctr dim-t">4</text>
      <text x="1008" y="186" class="ctr dim-t">5</text><text x="1139" y="186" class="ctr dim-t">6</text><text x="1270" y="186" class="ctr dim-t">7</text>
    </g>
    <g class="cad-s">
      <text x="791" y="305">L-3(1) 200*450</text>
      <text x="791" y="319">A8@200(2) 2Φ14;2Φ14</text>
      <text x="791" y="331">N2Φ12</text>
      <text x="872" y="185">2Φ16.6</text>
      <text transform="translate(1008 302) rotate(-90)">3Φ14.6</text>
      <text transform="translate(749 342) rotate(-90)">3Φ16.6</text>
    </g>
  </svg>

  <div class="tbrow row6">
    <div class="tb tb-snap1"><span class="grip"></span>
      <span class="t off-o"><svg class="ic"><use href="#ortho"/></svg>正交</span>
      <span class="t t-on t-snap"><svg class="ic"><use href="#snap"/></svg>对象捕捉</span>
      <span class="t"><svg class="ic"><use href="#dyn"/></svg>动态输入</span>
    </div>
    <div class="tb tb-snap2"><span class="grip"></span>
      <span class="t"><svg class="ic"><use href="#xpt"/></svg>交点</span>
      <span class="t t-on t-pair"><svg class="ic"><use href="#perp"/></svg>垂点</span>
      <span class="t t-on t-pair"><svg class="ic"><use href="#mid"/></svg>中点</span>
      <span class="t"><svg class="ic"><use href="#vert"/></svg>顶点</span>
      <span class="t"><svg class="ic"><use href="#coord"/></svg>坐标</span>
    </div>
    <div class="tb tb-snap3"><span class="grip"></span>
      <span class="combo c-off">不偏移</span><i class="dd"></i><b class="sep"></b>
      <span class="lbl-off lbl-x">X=</span><span class="num">0</span><span class="spin"></span><span class="lbl">mm</span>
      <span class="lbl-off">Y=</span><span class="num">0</span><span class="spin"></span><span class="lbl">mm</span>
      <span class="chk"></span><span class="lbl2">旋转</span><span class="num num-w">0.000</span><span class="spin"></span><span class="lbl lbl-deg">°</span>
    </div>
  </div>

  <section class="panel">
    <div class="panel-side">
      <svg class="panel-close" viewBox="0 0 12 12"><rect x=".5" y=".5" width="11" height="11" fill="#e8ecf0" stroke="#667"/><path d="M2 2l8 8M10 2l-8 8" stroke="#b04040" stroke-width="1.500"/></svg>
      <span class="grip grip-long"></span>
    </div>
    <div class="panel-main">
      <div class="panel-bar">
        <svg class="nav nav-first" viewBox="0 0 12 12"><path d="M2 1h2v10H2zM11 1v10L5 6z" fill="#c4ccd4"/></svg>
        <svg class="nav" viewBox="0 0 12 12"><path d="M9 1v10L3 6z" fill="#c4ccd4"/></svg>
        <svg class="nav" viewBox="0 0 12 12"><path d="M3 1v10l6-5z" fill="#2468c0"/></svg>
        <svg class="nav" viewBox="0 0 12 12"><path d="M8 1h2v10H8zM1 1v10l6-5z" fill="#2468c0"/></svg>
        <b class="sep sep-nav"></b>
        <svg class="nav nav2" viewBox="0 0 12 12"><path d="M6 1L2 6h2v5h4V6h2z" fill="#c4ccd4"/></svg>
        <svg class="nav nav2" viewBox="0 0 12 12"><path d="M6 11L2 6h2V1h4v5h2z" fill="#2468c0"/></svg>
        <b class="sep sep-nav2"></b>
        <span class="t"><svg class="ic"><use href="#ins"/></svg>插入</span>
        <span class="t"><svg class="ic"><use href="#del"/></svg>删除</span>
        <span class="t"><svg class="ic"><use href="#scale"/></svg>缩尺配筋</span>
        <span class="t"><svg class="ic"><use href="#info"/></svg>钢筋信息</span>
        <span class="t"><svg class="ic"><use href="#lib"/></svg>钢筋图库</span>
        <span class="t"><svg class="ic"><use href="#other"/></svg>其他</span><i class="dd dd-n"></i>
        <span class="t">关闭</span><b class="sep"></b>
        <span class="t t-total">单构件钢筋总重(kg): 33.969</span>
      </div>
      <div class="grid-box">
        <table class="grid">
          <colgroup><col class="c0"><col class="c1"><col class="c2"><col class="c3"><col class="c4"><col class="c5"><col class="c6"><col class="c7"><col class="c8"><col class="c9"><col class="c10"><col class="c11"><col class="c12"><col class="c13"><col class="c14"></colgroup>
          <thead><tr class="hr"><th></th><th>筋号</th><th>图形</th><th>计算公式</th><th>公式描述</th><th>弯曲调整<span class="lat">(mm)</span></th><th>长度<span class="lat">(mm)</span></th><th>根数</th><th>搭接</th><th>损耗<span class="lat">(%)</span></th><th>单重<span class="lat">(kg)</span></th><th>总重<span class="lat">(kg)</span></th><th>钢筋归类</th><th>搭接形式</th><th class="th-cut">钢筋</th></tr></thead>
          <tbody>
            <tr class="r1 cur"><td class="rh rh-cur"><span class="lat">1*</span></td><td>1跨<span class="lat">.</span>上通长<br>筋1</td>
              <td class="sh"><svg class="shape" viewBox="0 0 200 38"><path d="M41 13v13h119V13" class="bar"/><text x="20" y="24">210</text><text x="101" y="23" class="red mid-a">3688</text><text x="163" y="24">210</text></svg></td>
              <td class="f"><span class="lat">0.6*35*d+15*d+3100+0.6*35*<br>d+15*d</span></td><td class="d">伸入节点长度+节点设置中设<br>定的弯折+净长+伸入节点长<br>度+节点设置中设定的弯折</td>
              <td><span class="lat">64</span></td><td><span class="lat">4044</span></td><td><span class="lat">2</span></td><td><span class="lat">0</span></td><td><span class="lat">0</span></td><td><span class="lat">4.893</span></td><td><span class="lat">9.786</span></td><td>直筋</td><td>绑扎</td><td>普通</td></tr>
            <tr class="r2"><td class="rh"><span class="lat">2</span></td><td>1跨<span class="lat">.</span>侧面受<br>扭筋1</td>
              <td class="sh"><svg class="shape" viewBox="0 0 200 33"><path d="M41 9v14h119V9" class="bar"/><text x="20" y="20">240</text><text x="101" y="20" class="red mid-a">3460</text><text x="163" y="20">240</text></svg></td>
              <td class="f"><span class="lat">200-20+35*d-200+20+3100+20<br>0-20+35*d-200+20</span></td><td class="d">支座宽-保护层+弯折+净长+<br>支座宽-保护层+弯折</td>
              <td><span class="lat">55</span></td><td><span class="lat">3885</span></td><td><span class="lat">2</span></td><td><span class="lat">0</span></td><td><span class="lat">0</span></td><td><span class="lat">3.45</span></td><td><span class="lat">6.9</span></td><td>直筋</td><td>绑扎</td><td>普通</td></tr>
            <tr class="r3"><td class="rh"><span class="lat">3</span></td><td>1跨<span class="lat">.</span>下部钢<br>筋1</td>
              <td class="sh"><svg class="shape" viewBox="0 0 200 32"><path d="M41 8v14h119V8" class="bar"/><text x="26" y="20">30</text><text x="101" y="19" class="red mid-a">3460</text><text x="163" y="20">30</text></svg></td>
              <td class="f"><span class="lat">15*d+3100+15*d</span></td><td class="d">锚固+净长+锚固</td>
              <td><span class="lat">64</span></td><td><span class="lat">3456</span></td><td><span class="lat">2</span></td><td><span class="lat">0</span></td><td><span class="lat">0</span></td><td><span class="lat">4.182</span></td><td><span class="lat">8.364</span></td><td>直筋</td><td>绑扎</td><td>普通</td></tr>
            <tr class="r4"><td class="rh"><span class="lat">4</span></td><td>1跨<span class="lat">.</span>箍筋1</td>
              <td class="sh"><svg class="shape" viewBox="0 0 200 32"><path d="M83 7h33v21H83zM115 7l-12 6M115 13l-6 5" class="bar"/><text x="56" y="22">410</text><text x="84" y="25" class="red">160</text></svg></td>
              <td class="f"><span class="lat">2*((200-2*20)+(450-2*20))+<br>2*(11.9*d)</span></td><td class="d"></td>
              <td><span class="lat">42</span></td><td><span class="lat">1288</span></td><td><span class="lat">16</span></td><td><span class="lat">0</span></td><td><span class="lat">0</span></td><td><span class="lat">0.509</span></td><td><span class="lat">8.14</span></td><td>箍筋</td><td>绑扎</td><td>普通</td></tr>
            <tr class="r5"><td class="rh"><span class="lat">5</span></td><td>1跨<span class="lat">.</span>拉筋1</td>
              <td class="sh"><svg class="shape" viewBox="0 0 200 27"><path d="M52 24L38 10V6h131v4L155 24" class="bar"/><text x="91" y="19">160</text></svg></td>
              <td class="f"><span class="lat">(200-2*20)+2*(75+1.9*d)</span></td><td class="d"></td>
              <td><span class="lat">(0)</span></td><td><span class="lat">333</span></td><td><span class="lat">9</span></td><td><span class="lat">0</span></td><td><span class="lat">0</span></td><td><span class="lat">0.087</span></td><td><span class="lat">0.779</span></td><td>箍筋</td><td>绑扎</td><td>普通</td></tr>
            <tr class="r6"><td class="rh"><span class="lat">6</span></td><td></td><td class="sh"></td><td></td><td></td><td></td><td></td><td></td><td></td><td></td><td></td><td></td><td></td><td></td><td></td></tr>
          </tbody>
        </table>
        <div class="grid-scroll"><i class="sb-lt"></i><b class="grid-thumb"></b></div>
      </div>
    </div>
  </section>
</main>
</div>

<footer class="status">
  <span class="st st1"><span class="lat">X=16093 Y=11674</span></span>
  <span class="st st2">层高<span class="lat">:4.5m</span></span>
  <span class="st st3">底标高<span class="lat">:-0.05m</span></span>
  <span class="st st4"><span class="lat">1(2)</span></span>
  <span class="st st5">按鼠标左键指定第一个角点,或拾取构件图元</span>
  <span class="st st6"><span class="lat">222.4 FPS</span></span>
</footer>

<footer class="taskbar">
  <span class="start"><svg class="win"><use href="#win"/></svg></span>
  <span class="search"><i class="cortana"></i><span class="search-t">在这里输入你要搜索的内容</span><svg class="s-mic"><use href="#mic"/></svg></span>
  <span class="app-i"><svg class="ai20"><use href="#tview"/></svg></span>
  <span class="app-i"><svg class="ai"><use href="#fan"/></svg></span>
  <span class="app-i"><svg class="ai"><use href="#ie"/></svg></span>
  <span class="app-i wide"><svg class="ai"><use href="#swirl"/></svg></span>
  <span class="app-i nar run act"><svg class="ai"><use href="#appblue"/></svg></span>
  <span class="app-i nar run"><svg class="ai"><use href="#appbook"/></svg></span>
  <span class="app-i nar run pdf"><svg class="ai"><use href="#apppdf"/></svg><em>PDF</em></span>
  <span class="app-i nar run"><svg class="ai"><use href="#appnote"/></svg></span>
  <span class="tray-gap"></span>
  <span class="tscroll"><i class="up"></i><i class="down"></i></span>
  <span class="tlink">链接</span>
  <span class="tpeople"><svg class="ai20"><use href="#people"/></svg></span>
  <span class="cpu"><span>34%</span><span>CPU使用</span></span>
  <span class="tr"><i class="caret"></i></span>
  <span class="tr"><svg class="tr-game"><use href="#game"/></svg></span>
  <span class="tr"><svg class="tr-16"><use href="#bat"/></svg></span>
  <span class="tr"><svg class="tr-16"><use href="#wifi"/></svg></span>
  <span class="tr"><svg class="tr-16"><use href="#spk"/></svg></span>
  <span class="tr tr-k"><svg class="tr-kbd"><use href="#kbd"/></svg></span>
  <span class="tr tr-y">英</span>
  <span class="tr tr-s"><svg class="tr-16"><use href="#sgou"/></svg></span>
  <span class="clock"><span>14:33</span><span>2018/9/27</span></span>
  <span class="tnotif"><svg class="tr-16"><use href="#notif"/></svg><b class="badge">1</b></span>
</footer>
</div>

<div class="ball"><span>76</span></div>
<div class="ime">
  <svg class="ime-s"><use href="#sgou"/></svg><b class="ime-y">英</b><span class="ime-d">’,</span>
  <svg class="ime-i"><use href="#mile"/></svg><svg class="ime-i"><use href="#imic"/></svg><svg class="ime-i"><use href="#ikbd"/></svg><svg class="ime-i"><use href="#iper"/></svg><svg class="ime-i"><use href="#ishirt"/></svg><svg class="ime-i"><use href="#iwr"/></svg>
</div>
<div class="mark mark1"></div>
<div class="mark mark2"></div>
</body>
</html>
```
FILE: styles.css
```css
*{box-sizing:border-box}
html,body{margin:0;padding:0;height:768px;overflow:hidden}
body{width:1366px;background:#f0f0f0;color:#111;font:12px/16px "Noto Sans CJK SC","Liberation Sans",sans-serif;position:relative}
.defs{position:absolute;width:0;height:0}
.app{width:1366px;height:768px;display:flex;flex-direction:column}
.lat{font:11px/13px "Liberation Mono",monospace;letter-spacing:-.6px}
svg{display:block;flex:none}

.titlebar{height:23px;background:#fff;display:flex;align-items:center;padding-left:3px;overflow:hidden;position:relative}
.title-ic{width:15px;height:15px;margin-right:5px}
.title-text{white-space:nowrap;flex:none;width:1220px;overflow:hidden}
.title-path{font-size:13px;letter-spacing:.4px}
.winbtns{display:flex;position:absolute;right:21px;top:8px;gap:28px;background:#fff;padding-left:10px}
.winbtns svg{width:11px;height:12px}
.winbtns svg:last-child{margin-left:5px}

.inforow{height:31px;display:flex;justify-content:flex-end;align-items:center;background:#f2f2f2}
.hint{width:185px;height:30px;line-height:28px;padding-left:30px;color:#3c6000;background:#f7f7f7}
.userbox{width:210px;height:30px;margin-left:3px;display:flex;align-items:center;padding-left:5px;background:linear-gradient(#fbfbfb,#f2f2f2);border-radius:3px}
.ic-user{width:16px;height:20px;margin-right:5px}
.phone{font-size:12.500px;letter-spacing:.1px}
.bean{margin-left:8px}
.ic-bell{width:13px;height:18px;margin-left:10px}
.more{font:bold 11px/12px "Liberation Sans",sans-serif;margin-left:auto;align-self:flex-start;padding:4px 4px 0 0}
.more-r{margin:0;width:31px;padding-left:20px;height:30px}

.tbrow{display:flex;align-items:stretch}
.row1{height:27px;margin-bottom:3px}
.row3{height:25px;margin:1px 0 0 7px}
.row4{height:26px;margin:1px 0 0 7px}
.row5{height:26px;margin:3px 0 0 7px}
.row6{height:25px;margin:2px 0 0 7px;gap:2px}
.tb{display:flex;align-items:center;white-space:nowrap;background:linear-gradient(#fff,#f4f4f4 60%,#eee);border-radius:3px;height:100%;flex:none}
.tb-file{width:150px;padding-left:2px}
.tb-calc{width:548px;margin-left:3px}
.tb-view{width:663px;margin-left:2px}
.tb-edit{width:788px}
.tb-floor{width:636px}
.tb-axis{width:421px;margin-left:4px}
.tb-draw{width:1158px}
.tb-stub{width:33px;margin-left:3px}
.tb-snap1{width:209px}
.tb-snap2{width:263px}
.tb-snap3{width:410px}

.t{display:inline-flex;align-items:center;gap:3px;padding:0 4px;height:100%;flex:none}
.ic{width:16px;height:16px}
.sigma{width:16px;text-align:center;font:bold 15px/16px "Liberation Serif",serif}
.off{color:#9a9a9a}
.off-o{color:#222}
.t-undo{margin-left:2px}
.t-open{padding-right:1px}
.t-2d{background:#fff;height:23px;padding-left:4px}
.t-on{background:#dfeaf6;border:1px solid #2d8bd4;height:24px;padding:0 3px}
.t-edit{height:23px}
.t-sel{margin-left:1px}
.t-line{margin-left:5px}
.t-snap{margin-left:1px}
.t-list{margin-left:2px;gap:1px}
.t-pick{margin-left:1px}
.t-first{margin-left:3px}
.t-pair{padding:0 3px;height:24px}
.t-total{margin-left:2px}

.sep{width:1px;height:19px;background:#b8b8b8;margin-left:4px;flex:none}
.tb-edit .sep{margin-left:4.500px;margin-right:1px}
.tb-floor .sep{margin:0 3px 0 1px}
.dd{width:12px;height:100%;flex:none;display:inline-flex;align-items:center;justify-content:center}
.dd::before{content:"";border:3px solid transparent;border-top:3px solid #111;border-bottom:0}
.dd-n{width:9px}
.dd-c{width:15px}
.dd-g::before{border-top-color:#aaa}
.dd-box{background:#ececec;height:23px;margin-right:1px}
.tb-file .dd-n{width:12px;margin-right:2px}
.grip{width:4px;height:20px;flex:none;margin-left:1px;background:radial-gradient(circle,#aaa 45%,transparent 50%) 0 0/3px 3px;background-repeat:repeat}

.combo{display:inline-flex;align-items:center;width:57px;height:22px;padding-left:2px;background:#fff;flex:none;overflow:hidden;white-space:nowrap}
.c-first{width:45px;margin-left:1px}
.c-blank{justify-content:flex-end;padding:0;overflow:visible}
.c-off{width:45px;margin-left:2px}

.work{flex:1;display:flex;min-height:0;height:624px}
.side{width:165px;display:flex;flex-direction:column;flex:none}
.side-head{height:14px;margin-bottom:3px;background:#0a66e0;color:#fff;display:flex;justify-content:space-between;align-items:center;line-height:14px;padding:0 3px 0 1px}
.side-ctl{display:flex;gap:9px;padding-right:1px}
.side-ctl svg{width:10px;height:10px}
.side-tab{height:21px;margin:0 1px 1px;background:#f0f0f0;border:1px solid #b4b4b4;text-align:center;line-height:19px;flex:none}
.tree-panel{height:514px;margin:1px 2px 1px 2px;background:#fff;border:1px solid #a8a8a8;flex:none;display:flex;flex-direction:column;overflow:hidden}
.tree-tools{height:27px;flex:none;padding:5px 0 0 3px}
.tt-ic{width:42px;height:16px}
.tree-body{flex:1;display:flex;min-height:0;overflow:hidden}
.tree{width:143px;overflow:hidden;flex:none}
.nd{height:16px;display:flex;align-items:center;white-space:nowrap;line-height:16px;position:relative;background-repeat:no-repeat}
.g{padding-left:22px;background-image:repeating-linear-gradient(90deg,#666 0 1px,transparent 1px 2px);background-size:4px 1px;background-position:18px 8px}
.fd{width:16px;height:14px;margin-right:6px}
.chev{position:absolute;left:7px;top:4px;width:7px;height:7px;border:solid #888;border-width:0 1.500px 1.500px 0;transform:rotate(-45deg) scale(.9)}
.chev.open{transform:rotate(45deg) scale(.9);top:2px;left:8px;border-color:#555}
.c{padding-left:42px;background-image:repeating-linear-gradient(180deg,#666 0 1px,transparent 1px 2px),repeating-linear-gradient(180deg,#666 0 1px,transparent 1px 2px),repeating-linear-gradient(90deg,#666 0 1px,transparent 1px 2px);background-size:1px 16px,1px 16px,11px 1px;background-position:12px 0,30px 0,30px 8px}
.c.last{background-size:1px 16px,1px 8px,11px 1px}
.ti{width:15px;height:15px;margin-right:5px}
.sel{background-image:linear-gradient(#ccc,#ccc),repeating-linear-gradient(180deg,#666 0 1px,transparent 1px 2px),repeating-linear-gradient(180deg,#666 0 1px,transparent 1px 2px);background-size:57px 16px,1px 16px,1px 16px;background-position:39px 0,12px 0,30px 0}
.vbar{width:15px;flex:none;background:#efefef;display:flex;flex-direction:column;margin-top:2px;height:464px}
.thumb-v{flex:1;background:#c8c8c8;margin:0}
.sb-up,.sb-dn,.sb-lt,.sb-rt{display:block;flex:none;position:relative;background:#efefef}
.sb-up,.sb-dn{height:16px}
.sb-lt,.sb-rt{width:16px}
.sb-up::before,.sb-dn::before,.sb-lt::before,.sb-rt::before{content:"";position:absolute;left:5px;top:6px;width:5px;height:5px;border:solid #555;border-width:1.500px 0 0 1.500px}
.sb-up::before{transform:rotate(45deg)}
.sb-dn::before{transform:rotate(225deg);top:3px}
.sb-lt::before{transform:rotate(-45deg)}
.sb-rt::before{transform:rotate(135deg)}
.hbar{height:15px;flex:none;background:#efefef;margin:4px 1px 0 1px;display:flex}
.thumb-h{width:102px;background:#c8c8c8;flex:none}
.hbar .sb-rt{margin-left:auto;margin-right:26px}

.mainc{flex:1;display:flex;flex-direction:column;min-width:0}
.canvas{width:1196px;height:230px;margin:2px 0 0 5px;flex:none}
.cad text{font:15px "Liberation Sans",sans-serif;fill:#c8c8c8;letter-spacing:1px}
.cad .ctr{text-anchor:middle}
.cad .dim-t{fill:#777}
.cad-s text{font:10.500px "Liberation Mono",monospace;fill:#bdbdbd;letter-spacing:.4px}

.num{width:45px;height:20px;background:#fff;border:1px solid #b0b0b0;text-align:right;padding-right:7px;line-height:18px;color:#555;margin-left:2px;flex:none}
.num-w{width:53px;margin-left:5px;padding-right:3px;color:#444}
.spin{width:9px;height:20px;flex:none;margin-left:1px;position:relative}
.spin::before,.spin::after{content:"";position:absolute;left:1px;border:3px solid transparent}
.spin::before{top:1px;border-bottom-color:#333;border-top:0}
.spin::after{bottom:1px;border-top-color:#333;border-bottom:0}
.lbl{margin-left:2px;width:25px;flex:none}
.lbl-deg{margin-left:7px;width:8px}
.lbl-off{color:#8a8a8a;width:18px;flex:none;margin-left:1px}
.lbl-x{margin-left:3px}
.lbl2{margin-left:7px;flex:none}
.chk{width:12px;height:12px;border:1px solid #777;background:#fff;flex:none;margin-left:7px}

.panel{height:274px;margin-top:7px;display:flex;margin-left:5px}
.panel-side{width:12px;flex:none;display:flex;flex-direction:column;align-items:flex-start}
.panel-close{width:12px;height:12px}
.grip-long{height:250px;margin:6px 0 0 2px}
.panel-main{flex:1;display:flex;flex-direction:column;min-width:0}
.panel-bar{height:24px;display:flex;align-items:center;white-space:nowrap;background:linear-gradient(#fff,#f4f4f4);padding-left:3px;margin-bottom:1px}
.nav{width:12px;height:12px;margin-right:11px}
.nav-first{margin-right:16px}
.nav2{margin-right:10px}
.sep-nav{margin:0 7px 0 -3px;height:18px}
.sep-nav2{margin:0 2px 0 0;height:18px}
.grid-box{flex:1;background:#fff;border:1px solid #a8a8a8;border-right:0;position:relative;overflow:hidden}
.grid{table-layout:fixed;border-collapse:collapse;width:1183px}
.c0{width:33px}.c1{width:73px}.c2{width:201px}.c3{width:166px}.c4{width:156px}.c5{width:81px}.c6{width:61px}.c7{width:38px}.c8{width:39px}.c9{width:50px}.c10{width:61px}.c11{width:61px}.c12{width:71px}.c13{width:74px}.c14{width:18px}
.grid th{font-weight:400;background:linear-gradient(#fff,#eee);border-right:1px solid #c4c4c4;border-bottom:1px solid #bbb;height:20px;padding:0;text-align:center;overflow:hidden;white-space:nowrap;line-height:14px}
.grid th.th-cut{text-align:left;padding-left:10px}
.grid td{background:#ccffd6;border-right:1px solid #bcbcbc;border-bottom:2px solid #bcbcbc;padding:0 2px;overflow:hidden;white-space:nowrap;line-height:13px;vertical-align:middle}
.r1{height:40px}.r2{height:35px}.r3{height:34px}.r4{height:34px}.r5{height:29px}.r6{height:18px}
.grid .r6 td{background:#fff}
.grid td.rh{background:linear-gradient(#fafafa,#ececec);text-align:center;border-right:1px solid #bcbcbc}
.grid td.rh-cur{background:#ffd48e;color:#5a0a6a}
.grid td.sh{padding:0;border-left:1px solid #000;border-right:1px solid #bcbcbc}
.grid td.d{line-height:12px;vertical-align:top;padding-top:1px}
.grid .r2 td.d{padding-top:5px}
.grid .r3 td.d{padding-top:9px}
.shape{width:200px;font:11px "Liberation Mono",monospace;letter-spacing:-.6px}
.r1 .shape{height:38px}.r2 .shape{height:33px}.r3 .shape,.r4 .shape{height:32px}.r5 .shape{height:27px}
.shape text{fill:#111}
.shape .red{fill:#f00}
.shape .mid-a{text-anchor:middle}
.shape .bar{fill:none;stroke:#111;stroke-width:2}
.grid-scroll{position:absolute;left:1px;right:0;top:230px;height:15px;background:#efefef;display:flex}
.grid-thumb{width:699px;margin-left:341px;background:#c4c4c4}

.status{height:20px;margin-top:2px;display:flex;gap:2px;background:#f0f0f0;flex:none}
.st{background:linear-gradient(#fbfbfb,#f3f3f3);border:1px solid #ddd;line-height:18px;padding-left:1px;white-space:nowrap;overflow:hidden;flex:none}
.st1{width:148px}.st2{width:78px}.st3{width:98px}.st4{width:48px}.st5{width:915px}.st6{width:69px;padding-left:2px}

.taskbar{height:40px;background:#08181e;display:flex;align-items:stretch;color:#fff;flex:none}
.start{width:48px;background:#000;display:flex;align-items:center;justify-content:center;flex:none}
.win{width:16px;height:17px}
.search{width:344px;background:#f1f1f1;display:flex;align-items:center;color:#333;font-size:14px;padding-left:11px;flex:none}
.cortana{width:20px;height:20px;border:3px solid #111;border-radius:50%;flex:none;margin-right:9px}
.search-t{width:168px;white-space:nowrap;flex:none}
.s-mic{width:16px;height:20px;margin-left:108px}
.app-i{width:50px;display:flex;align-items:center;justify-content:center;flex:none;position:relative;border-bottom:2px solid transparent}
.ai{width:24px;height:24px}
.ai20{width:20px;height:20px}
.wide{width:55px}
.nar{width:49px}
.run{border-bottom-color:#76b9ed}
.act{background-color:#364650}
.pdf em{position:absolute;left:12px;top:13px;font:bold 10px/12px "Liberation Sans",sans-serif;color:#f4e0c8}
.tray-gap{width:53px;flex:none}
.tscroll{width:17px;background:#e6e6e6;display:flex;flex-direction:column;justify-content:space-around;align-items:center;flex:none;padding:6px 0}
.tscroll i{width:7px;height:7px;border:solid #333;border-width:2px 0 0 2px;transform:rotate(45deg)}
.tscroll .down{transform:rotate(225deg)}
.tlink{width:44px;text-align:center;line-height:38px;color:#ddd;flex:none}
.tpeople{width:46px;display:flex;align-items:center;justify-content:center;flex:none}
.cpu{width:76px;display:flex;flex-direction:column;align-items:center;justify-content:center;gap:3px;color:#e8e8e8;line-height:15px;flex:none}
.tr{width:24.500px;display:flex;align-items:center;justify-content:center;flex:none}
.tr-k{width:30px}
.tr-y{font-size:14px;color:#eee}
.tr-s{width:34px}
.caret{width:9px;height:9px;border:solid #fff;border-width:1.500px 0 0 1.500px;transform:rotate(45deg);margin-top:6px}
.tr-game{width:16px;height:20px}
.tr-16{width:17px;height:17px}
.tr-kbd{width:23px;height:17px}
.clock{width:74px;display:flex;flex-direction:column;align-items:center;justify-content:center;gap:3px;color:#eee;line-height:15px;flex:none}
.tnotif{flex:1;position:relative;display:flex;align-items:center;padding-left:12px}
.badge{position:absolute;left:20px;top:20px;width:16px;height:16px;border-radius:50%;background:#2a2a2a;border:1px solid #999;text-align:center;font:bold 12px/14px "Liberation Sans",sans-serif}

.ball{position:absolute;left:719px;top:-27px;width:44px;height:44px;border-radius:50%;background:#3fae3c;border:1px solid #e8e8e8;box-shadow:0 3px 7px 3px rgba(110,110,110,.55);color:#fff;text-align:center;font:bold 11px/12px "Liberation Sans",sans-serif;display:flex;align-items:flex-end;justify-content:center;padding-bottom:4px}
.ime{position:absolute;left:766px;top:4px;width:203px;height:23px;display:flex;align-items:center;background:#fff;border:1px solid #c4d4e8}
.ime-s{width:25px;height:24px;margin:1px 0 0 -1px}
.ime-y{color:#2478c8;font-size:14px;margin-left:6px;width:28px}
.ime-d{color:#2478c8;font:bold 11px/14px "Liberation Sans",sans-serif;width:16px}
.ime-i{width:18px;height:17px;margin-right:4px}
.mark{position:absolute;border:7px solid #f00;pointer-events:none}
.mark1{left:563px;top:94px;width:111px;height:48px}
.mark2{left:782px;top:438px;width:113px;height:46px;border-width:7px 8px}
```
